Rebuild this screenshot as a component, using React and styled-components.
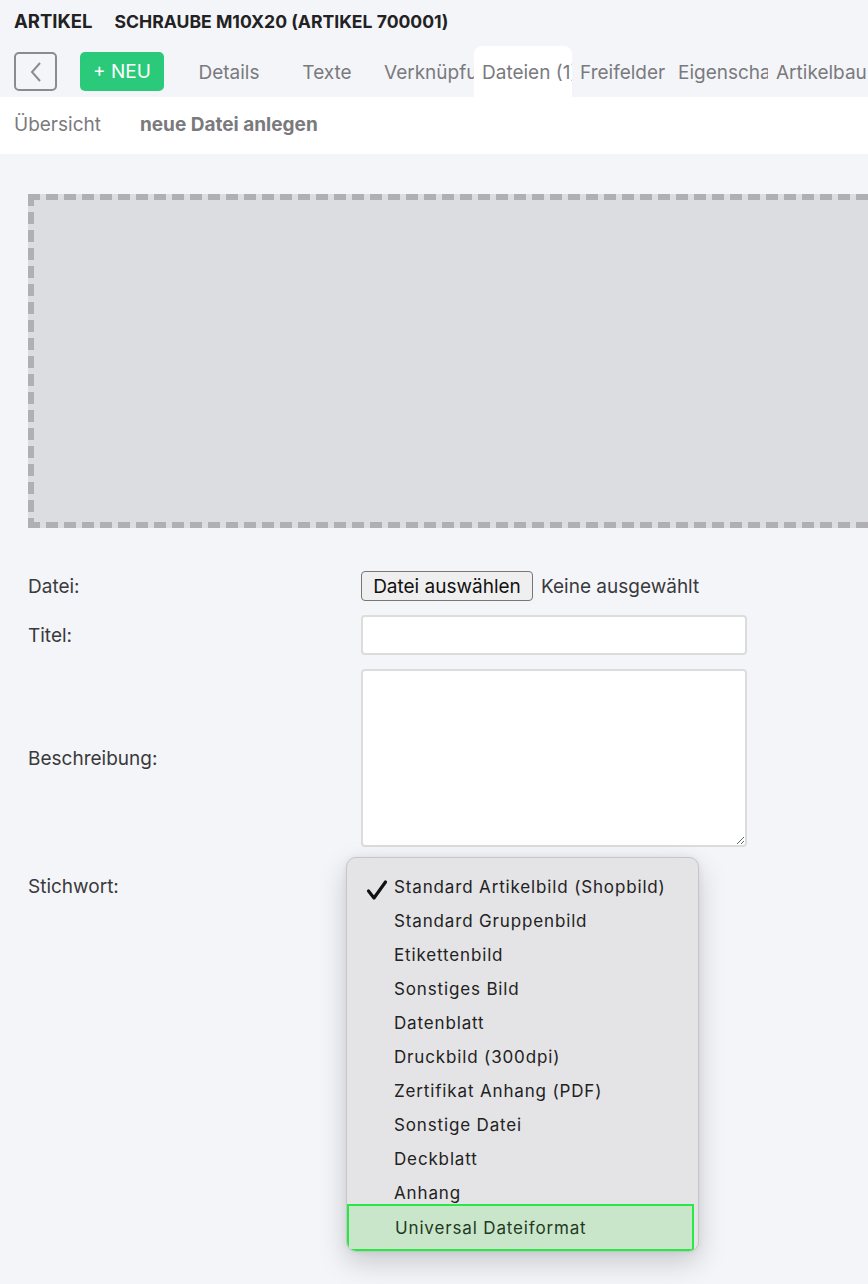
import React from "react";
import styled, { createGlobalStyle } from "styled-components";

const Global = createGlobalStyle`
  html, body { margin: 0; padding: 0; }
  body {
    background: #f4f5f9;
    font-family: Inter, "Noto Sans", sans-serif;
    color: #333;
    overflow: hidden;
  }
  * { box-sizing: border-box; }
`;

const Page = styled.div`
  width: 868px;
  min-height: 1284px;
  overflow: hidden;
  background: #f4f5f9;
`;

const TitleRow = styled.div`
  height: 46px;
  display: flex;
  align-items: center;
  gap: 22px;
  padding: 0 14px 4px;
`;

const Title = styled.span`
  font-weight: 700;
  font-size: ${(p) => (p.$small ? "17.6px" : "18.5px")};
  color: #222;
  white-space: nowrap;
`;

const Toolbar = styled.div`
  height: 51px;
  display: flex;
  align-items: center;
  padding-left: 14px;
`;

const BackButton = styled.button`
  width: 43px;
  height: 39px;
  border: 2px solid #8c8c8c;
  border-radius: 5px;
  background: transparent;
  display: flex;
  align-items: center;
  justify-content: center;
  padding: 0;
  margin-right: 23px;
`;

const NewButton = styled.button`
  width: 84px;
  height: 39px;
  border: none;
  border-radius: 5px;
  background: #2bca7a;
  color: #fff;
  font-family: Inter, sans-serif;
  font-size: 19px;
  padding: 0;
  margin-right: 16px;
`;

const Tab = styled.div`
  width: 98px;
  height: 51px;
  flex: none;
  padding: 0 8px;
  text-align: center;
  white-space: nowrap;
  overflow: hidden;
  font-size: 19px;
  line-height: 54px;
  color: #7a7a7e;
  background: ${(p) => (p.$active ? "#fff" : "transparent")};
  border-radius: 8px 8px 0 0;
`;

const SubNav = styled.div`
  height: 57px;
  background: #fff;
  display: flex;
  align-items: center;
  gap: 39px;
  padding: 0 14px 2px;
`;

const SubLink = styled.span`
  font-size: 19px;
  color: #7a7a7e;
  font-weight: ${(p) => (p.$bold ? 700 : 400)};
`;

const Content = styled.div`
  padding: 40px 0 0 28px;
`;

const dash = "#b0b0b4";
const DropZone = styled.div`
  width: 900px;
  height: 334px;
  background-color: #dcdde1;
  background-image:
    repeating-linear-gradient(90deg, ${dash} 0 12px, transparent 12px 18px),
    repeating-linear-gradient(90deg, ${dash} 0 12px, transparent 12px 18px),
    repeating-linear-gradient(180deg, ${dash} 0 12px, transparent 12px 18px);
  background-size: 100% 6px, 100% 6px, 6px 100%;
  background-position: 0 0, 0 100%, 0 0;
  background-repeat: no-repeat;
  margin-bottom: 43px;
`;

const Form = styled.div`
  display: grid;
  grid-template-columns: 333px 386px;
  row-gap: 14px;
  align-items: center;
`;

const Label = styled.label`
  font-size: 19px;
  color: #3a3a3c;
`;

const FileRow = styled.div`
  display: flex;
  align-items: center;
  gap: 8px;
  height: 30px;
`;

const FileButton = styled.button`
  height: 30px;
  width: 172px;
  border: 1px solid #767676;
  border-radius: 4px;
  background: #efefef;
  font-family: Inter, sans-serif;
  font-size: 19px;
  color: #111;
  padding: 0;
`;

const FileHint = styled.span`
  font-size: 19px;
  color: #3a3a3c;
`;

const TextInput = styled.input`
  height: 40px;
  width: 386px;
  border: 2px solid #dcdcdc;
  border-radius: 4px;
  background: #fff;
  outline: none;
`;

const TextArea = styled.textarea`
  height: 178px;
  width: 386px;
  border: 2px solid #dcdcdc;
  border-radius: 4px;
  background: #fff;
  outline: none;
  display: block;
`;

const SelectCell = styled.div`
  position: relative;
  height: 50px;
`;

const SelectBox = styled.div`
  height: 30px;
  margin-top: 10px;
  width: 330px;
  border: 1px solid #ccc;
  border-radius: 4px;
  background: #fff;
`;

const Menu = styled.ul`
  position: absolute;
  left: -15px;
  top: -4px;
  width: 353px;
  margin: 0;
  padding: 12px 0 0;
  list-style: none;
  background: #e4e4e6;
  border: 1px solid #c6c6c8;
  border-radius: 10px;
  box-shadow: 0 10px 28px rgba(0, 0, 0, 0.18), 0 0 6px rgba(0, 0, 0, 0.06);
  overflow: hidden;
`;

const Item = styled.li`
  position: relative;
  height: ${(p) => (p.$hl ? "47px" : "34px")};
  margin: ${(p) => (p.$hl ? "-6px 4px 0 0" : "0")};
  padding-left: ${(p) => (p.$hl ? "46px" : "47px")};
  display: flex;
  align-items: center;
  font-family: Inter, "Noto Sans", sans-serif;
  font-size: 17px;
  letter-spacing: 0.85px;
  color: ${(p) => (p.$hl ? "#1f3a22" : "#222")};
  background: ${(p) => (p.$hl ? "#c9e6cb" : "transparent")};
  border: ${(p) => (p.$hl ? "2px solid #27e845" : "none")};
`;

const Check = styled.svg`
  position: absolute;
  left: 19px;
  top: 9px;
`;

const tabs = [
  "Details",
  "Texte",
  "Verknüpfungen",
  "Dateien (1)",
  "Freifelder",
  "Eigenschaften",
  "Artikelbaum",
];

const options = [
  "Standard Artikelbild (Shopbild)",
  "Standard Gruppenbild",
  "Etikettenbild",
  "Sonstiges Bild",
  "Datenblatt",
  "Druckbild (300dpi)",
  "Zertifikat Anhang (PDF)",
  "Sonstige Datei",
  "Deckblatt",
  "Anhang",
  "Universal Dateiformat",
];

export default function App() {
  return (
    <Page>
      <Global />
      <TitleRow>
        <Title>ARTIKEL</Title>
        <Title $small>SCHRAUBE M10X20 (ARTIKEL 700001)</Title>
      </TitleRow>
      <Toolbar>
        <BackButton aria-label="zurück">
          <svg width="14" height="22" viewBox="0 0 14 22">
            <path d="M11 2 L3 11 L11 20" fill="none" stroke="#8c8c8c" strokeWidth="2" />
          </svg>
        </BackButton>
        <NewButton>+ NEU</NewButton>
        {tabs.map((t) => (
          <Tab key={t} $active={t.startsWith("Dateien")}>
            {t}
          </Tab>
        ))}
      </Toolbar>
      <SubNav>
        <SubLink>Übersicht</SubLink>
        <SubLink $bold>neue Datei anlegen</SubLink>
      </SubNav>
      <Content>
        <DropZone />
        <Form>
          <Label>Datei:</Label>
          <FileRow>
            <FileButton>Datei auswählen</FileButton>
            <FileHint>Keine ausgewählt</FileHint>
          </FileRow>
          <Label>Titel:</Label>
          <TextInput />
          <Label>Beschreibung:</Label>
          <TextArea />
          <Label>Stichwort:</Label>
          <SelectCell>
            <SelectBox />
            <Menu>
              {options.map((o, i) => (
                <Item key={o} $hl={i === options.length - 1}>
                  {i === 0 && (
                    <Check width="22" height="22" viewBox="0 0 22 22">
                      <path
                        d="M2.5 12 L8 19 L19.5 3"
                        fill="none"
                        stroke="#111"
                        strokeWidth="3.2"
                        strokeLinecap="round"
                        strokeLinejoin="round"
                      />
                    </Check>
                  )}
                  {o}
                </Item>
              ))}
            </Menu>
          </SelectCell>
        </Form>
      </Content>
    </Page>
  );
}
